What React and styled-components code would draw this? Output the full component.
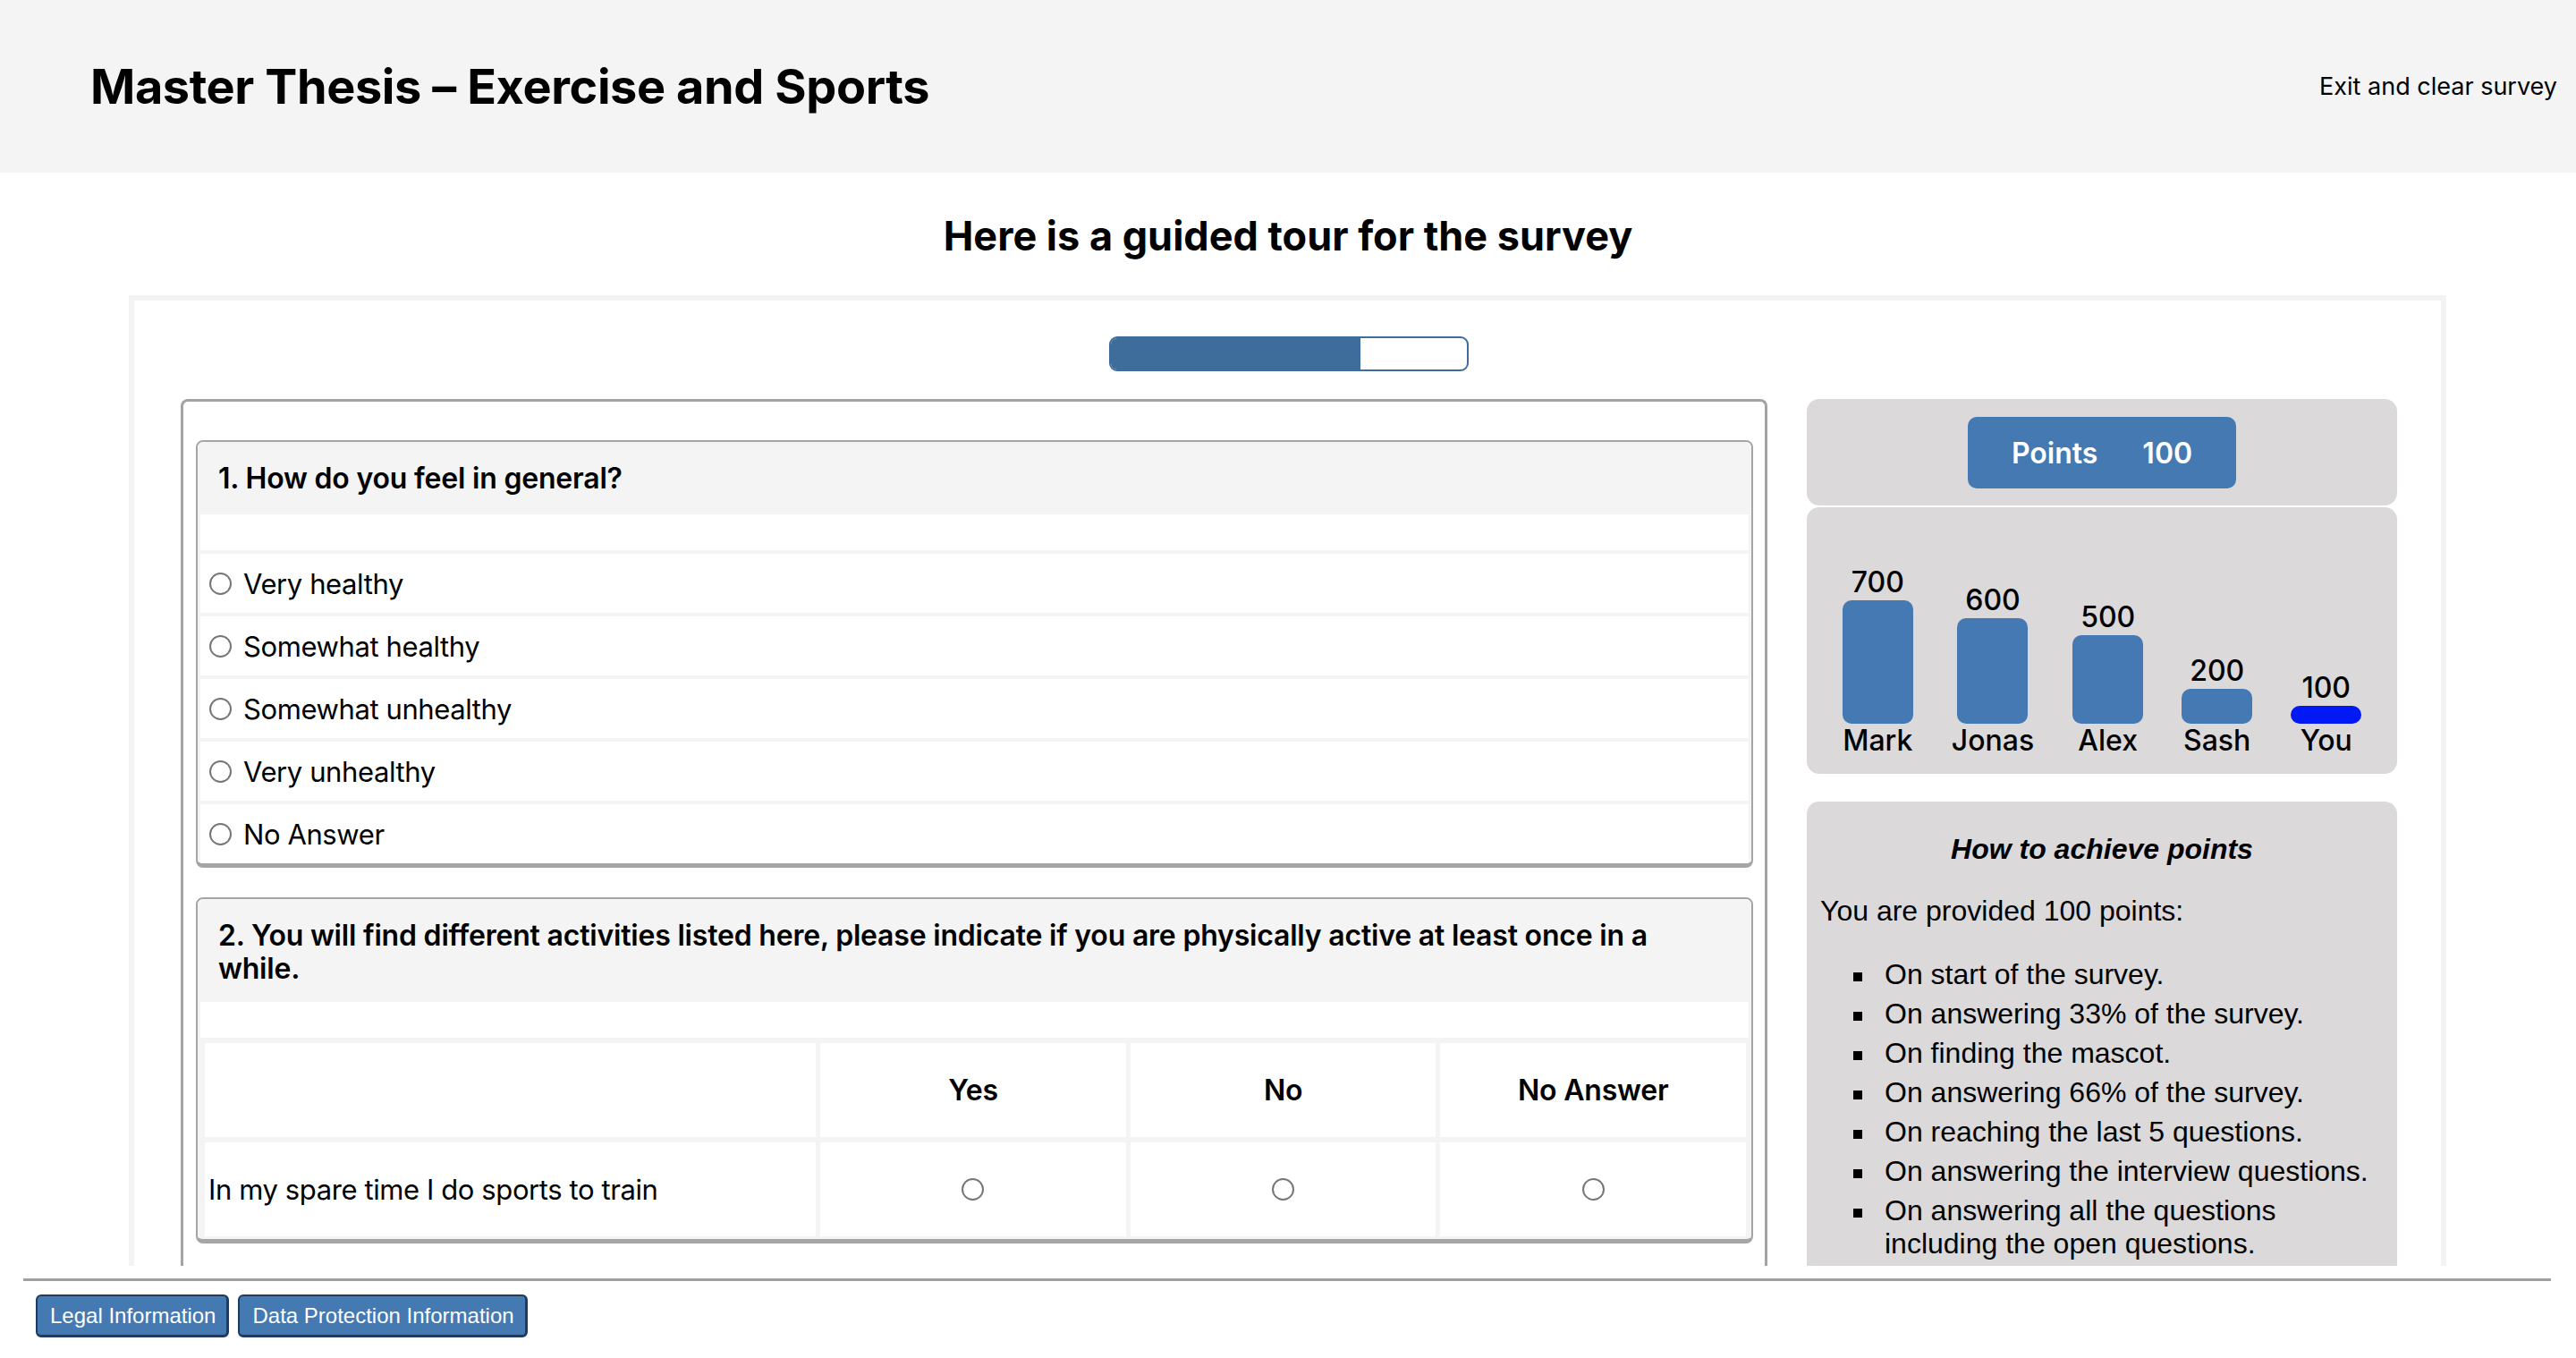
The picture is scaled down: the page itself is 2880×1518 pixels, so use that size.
import React from 'react';
import styled, { createGlobalStyle } from 'styled-components';

const GlobalStyle = createGlobalStyle`
  * {
    box-sizing: border-box;
  }
  body {
    margin: 0;
    background: #ffffff;
    color: #000000;
    font-family: Inter, 'Noto Sans', sans-serif;
  }
`;

const options = ['Very healthy', 'Somewhat healthy', 'Somewhat unhealthy', 'Very unhealthy', 'No Answer'];

const ranking = [
  { name: 'Mark', value: 700 },
  { name: 'Jonas', value: 600 },
  { name: 'Alex', value: 500 },
  { name: 'Sash', value: 200 },
  { name: 'You', value: 100, me: true },
];

const rules = [
  'On start of the survey.',
  'On answering 33% of the survey.',
  'On finding the mascot.',
  'On answering 66% of the survey.',
  'On reaching the last 5 questions.',
  'On answering the interview questions.',
  'On answering all the questions including the open questions.',
];

function App() {
  const progress = 70; // percent of the tour done

  return (
    <>
      <GlobalStyle />
      <Header>
        <Title>Master Thesis – Exercise and Sports</Title>
        <ExitLink>Exit and clear survey</ExitLink>
      </Header>

      <SubTitle>Here is a guided tour for the survey</SubTitle>

      <SurveyFrame>
        <Progress>
          <ProgressFill style={{ width: `${progress}%` }} />
        </Progress>

        <Columns>
          <QuestionPanel>
            <Card>
              <CardHeader>1. How do you feel in general?</CardHeader>
              <CardBody>
                <Spacer />
                {options.map((opt) => (
                  <OptionRow key={opt}>
                    <Radio />
                    {opt}
                  </OptionRow>
                ))}
              </CardBody>
            </Card>

            <Card>
              <CardHeader>
                2. You will find different activities listed here, please indicate if you are physically active at least once in a while.
              </CardHeader>
              <CardBody>
                <Spacer />
                <Matrix>
                  <Cell />
                  <HeadCell>Yes</HeadCell>
                  <HeadCell>No</HeadCell>
                  <HeadCell>No Answer</HeadCell>
                  <Cell $left>In my spare time I do sports to train</Cell>
                  <Cell><Radio /></Cell>
                  <Cell><Radio /></Cell>
                  <Cell><Radio /></Cell>
                </Matrix>
              </CardBody>
            </Card>
          </QuestionPanel>

          <Sidebar>
            <PointsBox>
              <PointsBadge>
                <span>Points</span>
                <span>100</span>
              </PointsBadge>
            </PointsBox>

            <ChartBox>
              {ranking.map((r) => (
                <BarColumn key={r.name}>
                  <BarValue>{r.value}</BarValue>
                  <Bar $me={r.me} style={{ height: `${Math.round(r.value * 0.197)}px` }} />
                  <BarName>{r.name}</BarName>
                </BarColumn>
              ))}
            </ChartBox>

            <InfoBox>
              <InfoTitle>How to achieve points</InfoTitle>
              <InfoText>You are provided 100 points:</InfoText>
              <RuleList>
                {rules.map((r) => (
                  <li key={r}>
                    <span>{r}</span>
                  </li>
                ))}
              </RuleList>
            </InfoBox>
          </Sidebar>
        </Columns>
      </SurveyFrame>

      <Footer>
        <FooterLine />
        <FooterButtons>
          <FooterButton>Legal Information</FooterButton>
          <FooterButton>Data Protection Information</FooterButton>
        </FooterButtons>
      </Footer>
    </>
  );
}

const Header = styled.header`
  height: 193px;
  background: #f4f4f4;
  display: flex;
  align-items: center;
  justify-content: space-between;
  padding: 0 21px 0 101px;
`;

const Title = styled.h1`
  margin: 0;
  font-size: 54px;
  font-weight: 700;
  letter-spacing: -0.4px;
`;

const ExitLink = styled.a`
  font-size: 27px;
  color: #000;
  cursor: pointer;
`;

const SubTitle = styled.h2`
  margin: 43px 0 39px;
  text-align: center;
  font-size: 45px;
  line-height: 55px;
  font-weight: 700;
`;

const SurveyFrame = styled.main`
  margin: 0 145px 0 144px;
  border: 6px solid #f3f3f3;
  border-bottom: none;
  padding: 40px 49px 0 52px;
`;

const Progress = styled.div`
  width: 402px;
  height: 39px;
  margin: 0 auto 31px;
  border: 2px solid #3e6d9c;
  border-radius: 9px;
  overflow: hidden;
  background: #fff;
`;

const ProgressFill = styled.div`
  height: 100%;
  background: #3e6d9c;
`;

const Columns = styled.div`
  display: flex;
  align-items: flex-start;
  gap: 44px;
`;

const QuestionPanel = styled.section`
  flex: 1;
  display: flex;
  flex-direction: column;
  gap: 33px;
  padding: 43px 13px 80px 14px;
  border: 3px solid #a3a3a3;
  border-bottom: none;
  border-radius: 8px 8px 0 0;
`;

const Card = styled.div`
  border: 2px solid #a5a5a5;
  border-bottom-width: 5px;
  border-radius: 8px;
  overflow: hidden;
  background: #f4f4f4;
`;

const CardHeader = styled.div`
  padding: 22px 23px 19px;
  min-height: 81px;
  font-size: 32px;
  line-height: 37px;
  font-weight: 600;
  letter-spacing: -0.2px;
  background: #f4f4f4;
`;

const CardBody = styled.div`
  display: flex;
  flex-direction: column;
  gap: 4px;
  padding: 0 3px 0 3px;
`;

const Spacer = styled.div`
  height: 40px;
  background: #fff;
`;

const OptionRow = styled.label`
  display: flex;
  align-items: center;
  gap: 13px;
  height: 66px;
  padding-left: 10px;
  background: #fff;
  font-size: 31px;
  letter-spacing: -0.4px;
`;

const Radio = styled.span`
  display: inline-block;
  width: 25px;
  height: 25px;
  border: 2px solid #767676;
  border-radius: 50%;
  background: #fff;
  flex-shrink: 0;
`;

const Matrix = styled.div`
  display: grid;
  grid-template-columns: 2fr 1fr 1fr 1fr;
  grid-auto-rows: 105px;
  gap: 6px 5px;
  padding: 2px 3px 3px 5px;
`;

const Cell = styled.div`
  display: flex;
  align-items: center;
  justify-content: ${(p) => (p.$left ? 'flex-start' : 'center')};
  padding-left: ${(p) => (p.$left ? '4px' : '0')};
  background: #fff;
  font-size: 31px;
  letter-spacing: -0.4px;
`;

const HeadCell = styled(Cell)`
  font-size: 32px;
  font-weight: 600;
  letter-spacing: -0.2px;
`;

const Sidebar = styled.aside`
  width: 660px;
  display: flex;
  flex-direction: column;
`;

const GreyBox = styled.div`
  background: #dbd9da;
  border-radius: 14px;
`;

const PointsBox = styled(GreyBox)`
  height: 119px;
  display: flex;
  justify-content: center;
  padding-top: 20px;
`;

const PointsBadge = styled.div`
  width: 300px;
  height: 80px;
  display: flex;
  align-items: center;
  justify-content: center;
  gap: 50px;
  background: #4579b2;
  border-radius: 10px;
  color: #fff;
  font-size: 32px;
  font-weight: 600;
`;

const ChartBox = styled(GreyBox)`
  margin-top: 2px;
  height: 298px;
  display: flex;
  align-items: flex-end;
  justify-content: center;
  gap: 43px;
  padding-bottom: 18px;
`;

const BarColumn = styled.div`
  min-width: 79px;
  display: flex;
  flex-direction: column;
  align-items: center;
`;

const BarValue = styled.div`
  font-size: 32px;
  line-height: 30px;
  font-weight: 500;
  margin-bottom: 5px;
`;

const Bar = styled.div`
  width: 79px;
  border-radius: 10px;
  background: ${(p) => (p.$me ? '#0019f5' : '#4479b3')};
`;

const BarName = styled.div`
  font-size: 32px;
  line-height: 38px;
  font-weight: 500;
`;

const InfoBox = styled(GreyBox)`
  margin-top: 31px;
  padding: 35px 15px 40px 15px;
  font-family: 'Liberation Sans', Arial, sans-serif;
  font-size: 32px;
`;

const InfoTitle = styled.h3`
  margin: 0 0 32px;
  text-align: center;
  font-size: 32px;
  font-weight: 700;
  font-style: italic;
`;

const InfoText = styled.p`
  margin: 0 0 34px;
`;

const RuleList = styled.ul`
  margin: 0;
  padding-left: 37px;
  list-style: none;

  li {
    display: flex;
    gap: 25px;
    line-height: 37px;
    margin-bottom: 7px;
  }

  li::before {
    content: '';
    flex-shrink: 0;
    width: 10px;
    height: 10px;
    margin-top: 16px;
    background: #000;
  }
`;

const Footer = styled.footer`
  position: fixed;
  left: 0;
  right: 0;
  bottom: 0;
  height: 103px;
  background: #fff;
  padding: 14px 28px 0 26px;
`;

const FooterLine = styled.div`
  height: 3px;
  background: #a0a0a0;
`;

const FooterButtons = styled.div`
  display: flex;
  gap: 10px;
  margin-top: 15px;
  padding-left: 14px;
`;

const FooterButton = styled.button`
  height: 48px;
  padding: 0 12px 0 14px;
  background: #4479b2;
  color: #fff;
  border: 2px solid #1f3b5e;
  border-bottom-width: 3px;
  border-right-width: 3px;
  border-radius: 6px;
  font-family: 'Liberation Sans', Arial, sans-serif;
  font-size: 24px;
  cursor: pointer;
`;

export default App;
